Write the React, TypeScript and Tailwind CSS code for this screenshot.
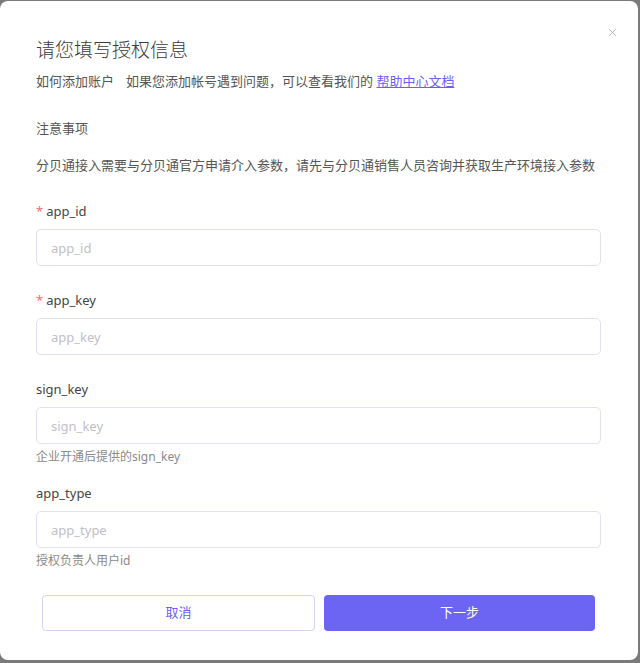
import { X } from "lucide-react";

const font = { fontFamily: '"Noto Sans", "Noto Sans CJK SC", sans-serif' };

type Field = {
  name: string;
  required?: boolean;
  help?: string;
};

const fields: Field[] = [
  { name: "app_id", required: true },
  { name: "app_key", required: true },
  { name: "sign_key", help: "企业开通后提供的sign_key" },
  { name: "app_type", help: "授权负责人用户id" },
];

function FormItem({ field }: { field: Field }) {
  return (
    <div className={field.help ? "" : "mb-[23px]"}>
      <div className="h-[22px] leading-[22px] text-[13px] text-[#444]">
        {field.required && <span className="mr-[3px] text-[#f56c6c]">*</span>}
        {field.name}
      </div>
      <input
        placeholder={field.name}
        className="mt-[7px] block h-[37px] w-full rounded-[5px] border border-[#e1e0f2] bg-white px-[14px] text-[13px] text-[#333] outline-none placeholder:text-[#c0c0c8]"
        style={font}
      />
      {field.help && (
        <div className="mb-[15px] mt-[3px] h-[20px] leading-[20px] text-[12px] text-[#8a8a8a]">
          {field.help}
        </div>
      )}
    </div>
  );
}

export default function App() {
  return (
    <div className="h-[663px] w-[640px] bg-[#7a7a7a] pb-[3px] pr-[2px] pt-[1px]" style={font}>
      <div className="relative h-full w-full rounded-[8px] bg-white px-[37px] pl-[36px]">
        <button className="absolute right-[19px] top-[25px] text-[#a0a0a0]">
          <X className="h-[13px] w-[13px]" strokeWidth={1.3} />
        </button>

        <div className="pt-[36px] h-[60px] leading-[26px] text-[19px] font-light text-[#3a3a3a]">请您填写授权信息</div>
        <div className="mt-[9px] h-[22px] leading-[22px] text-[13px] text-[#555]">
          如何添加账户<span className="ml-[12px]">如果您添加帐号遇到问题，可以查看我们的 </span>
          <a className="text-[#6b5ff0] underline">帮助中心文档</a>
        </div>
        <div className="mt-[25px] h-[22px] leading-[22px] text-[13px] text-[#555]">注意事项</div>
        <div className="mt-[15px] h-[22px] leading-[22px] text-[13px] text-[#555] whitespace-nowrap">
          分贝通接入需要与分贝通官方申请介入参数，请先与分贝通销售人员咨询并获取生产环境接入参数
        </div>

        <div className="mt-[24px]">
          {fields.map((f) => (
            <FormItem key={f.name} field={f} />
          ))}
        </div>

        <div className="mt-[24px] flex gap-[9px] px-[6px]">
          <button className="h-[36px] flex-1 rounded-[4px] border border-[#d5d2f5] bg-white text-[13px] text-[#6b5ff0]">
            取消
          </button>
          <button className="h-[36px] flex-1 rounded-[4px] bg-[#6c64f3] text-[13px] text-white">
            下一步
          </button>
        </div>
      </div>
    </div>
  );
}
